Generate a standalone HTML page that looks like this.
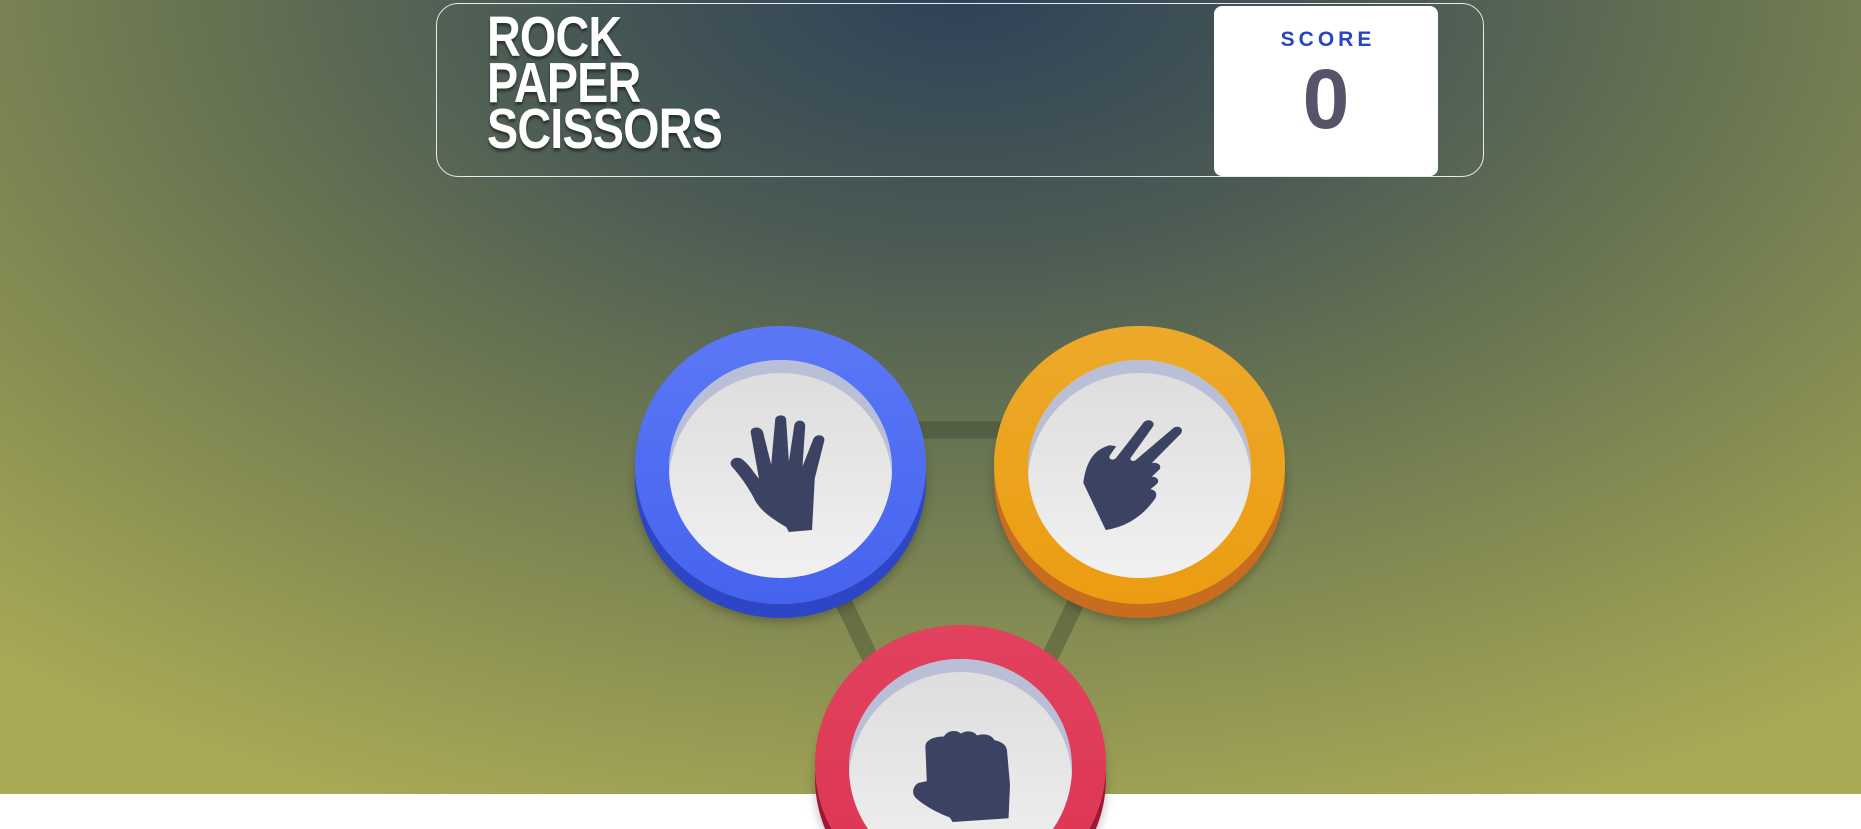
<!DOCTYPE html>
<html><head><meta charset="utf-8"><style>
html,body{margin:0;padding:0;width:1861px;height:829px;overflow:hidden;background:#fff;font-family:"Liberation Sans",sans-serif}
.wrap{position:relative;width:1861px;height:829px;overflow:hidden}
.bg{position:absolute;left:0;top:0;width:1861px;height:794px;background:radial-gradient(ellipse 1500px 900px at 960px -20px,#2c4159 0%,#4b5b54 30%,#6c7852 55%,#8f9453 80%,#aaaa55 100%)}
.hdr{position:absolute;left:436px;top:3px;width:1046px;height:172px;border:1.5px solid #e8eaf0;border-radius:22px}
.title{position:absolute;left:487px;top:14px;font-weight:bold;font-size:57px;line-height:46px;color:#fff;text-shadow:0 3px 3px rgba(0,0,0,.45);letter-spacing:-1px;transform:scaleX(.82);transform-origin:left top}
.score{position:absolute;left:1214px;top:6px;width:224px;height:170px;background:#fff;border-radius:8px;text-align:center}
.score .l{margin-top:22px;font-size:21px;font-weight:bold;letter-spacing:4px;color:#2a45c2;padding-left:4px}
.score .n{font-size:84px;font-weight:bold;color:#565468;line-height:90px;margin-top:2px}
.tok{position:absolute;width:291px;height:278px;border-radius:50%}
.in{position:absolute;left:34px;top:34px;width:223px;height:218px;border-radius:50%;background:linear-gradient(#dcdcdc,#f1f1f1);box-shadow:inset 0 13px 0 #b9bfd6}
.in svg{position:absolute}
</style></head><body><div class="wrap">
<div class="bg"></div>
<div class="hdr"></div>
<div class="title">ROCK<br>PAPER<br>SCISSORS</div>
<div class="score"><div class="l">SCORE</div><div class="n">0</div></div>
<svg style="position:absolute;left:0;top:0" width="1861" height="829">
<g stroke="rgba(40,45,30,.3)" stroke-width="17" fill="none">
<line x1="780" y1="430" x2="1139" y2="430"/>
<line x1="780" y1="470" x2="900" y2="720"/>
<line x1="1139" y1="470" x2="1020" y2="720"/>
</g></svg>
<div class="tok" style="left:635px;top:326px;background:linear-gradient(#5a78f6,#4663ef);box-shadow:0 14px 0 #2c46c6,0 18px 10px rgba(0,0,0,.25)">
<div class="in"><svg style="left:60px;top:55px" width="98" height="117" viewBox="2 0 72 118" preserveAspectRatio="none"><path fill="#3b4262" d="M46 118 L44 113 C34 105 24 96 20 83 C14 68 8 58 4 52 C1 46 7 40 12 45 C17 50 21 60 24 64 L18 18 C17 12 25 10 27 17 L33 50 L36 4 C37 -1 44 -1 44 5 L46 47 L50 10 C51 4 58 4 58 11 L56 52 L64 24 C66 18 73 20 72 26 L65 64 L63 116 Z"/></svg></div></div>
<div class="tok" style="left:994px;top:326px;background:linear-gradient(#eda92a,#eb9d12);box-shadow:0 14px 0 #c86c1f,0 18px 10px rgba(0,0,0,.25)">
<div class="in"><svg style="left:54px;top:58px" width="104" height="113" viewBox="7 0 79 108" preserveAspectRatio="none"><path fill="#3b4262" d="M8 62 C10 42 16 30 28 26 L33 27 L28 36 C27 40 31 41 33 38 L54 4 C57 0 63 3 61 8 L44 38 C43 41 46 42 48 40 L76 10 C80 6 85 10 82 15 L60 43 C63 42 68 44 66 49 L60 56 C64 56 67 60 63 64 L59 68 C63 69 65 73 62 78 C54 92 42 104 25 107 Z"/></svg></div></div>
<div class="tok" style="left:815px;top:625px;background:linear-gradient(#e1425e,#dc3452);box-shadow:0 14px 0 #9e1836,0 18px 10px rgba(0,0,0,.25)">
<div class="in"><svg style="left:62px;top:70px" width="99" height="93" viewBox="9 0 69 100" preserveAspectRatio="none"><path fill="#3b4262" d="M38 100 L36 95 C27 90 18 82 13 75 C9 70 10 62 14 58 L20 56 L19 18 C20 10 27 8 32 8 C34 2 40 0 44 5 C47 1 53 2 55 7 C60 4 66 7 67 12 C73 14 76 18 76 25 L78 60 L77 96 Z"/></svg></div></div>
</div></body></html>
